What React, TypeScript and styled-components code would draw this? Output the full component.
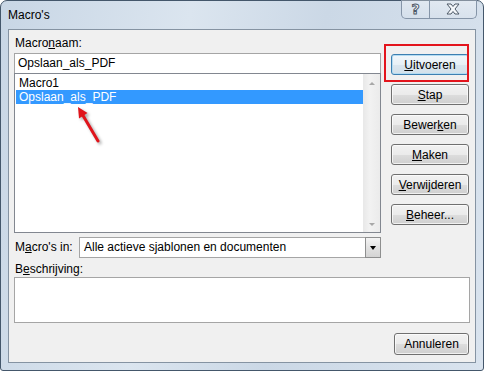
import styled, { createGlobalStyle } from "styled-components";

const GlobalStyle = createGlobalStyle`
  html, body {
    margin: 0;
    padding: 0;
    background: #ffffff;
  }
  body {
    font-family: "Liberation Sans", Arial, sans-serif;
    font-size: 12px;
    color: #000;
  }
`;

const Window = styled.div`
  position: relative;
  width: 484px;
  height: 371px;
  box-sizing: border-box;
  border: 1px solid #44576b;
  border-radius: 7px 7px 3px 3px;
  background: linear-gradient(100deg, #c8d6e5 0%, #dbe5ef 35%, #cbd8e6 60%, #d9e3ee 100%);
  padding: 0 7px 7px;
  display: flex;
  flex-direction: column;
`;

const TitleBar = styled.div`
  height: 28px;
  display: flex;
  justify-content: space-between;
  align-items: flex-start;
`;

const Title = styled.span`
  margin-top: 7px;
  line-height: 15px;
  font-size: 12px;
`;

const CaptionButtons = styled.div`
  display: flex;
  margin-top: -1px;
  margin-right: -1px;
`;

const CaptionButton = styled.div<{ $wide?: boolean }>`
  width: ${(p) => (p.$wide ? 47 : 29)}px;
  height: 19px;
  box-sizing: border-box;
  border: 1px solid #8595a8;
  border-top: none;
  border-left: ${(p) => (p.$wide ? "none" : "1px solid #8595a8")};
  border-radius: ${(p) => (p.$wide ? "0 0 5px 0" : "0 0 0 5px")};
  background: linear-gradient(180deg, rgba(255, 255, 255, 0.35), rgba(255, 255, 255, 0.1));
  display: flex;
  align-items: center;
  justify-content: center;
`;

const HelpGlyph = styled.span`
  font-family: "DejaVu Sans", sans-serif;
  font-weight: bold;
  font-size: 14px;
  line-height: 14px;
  color: #f4f7fa;
  -webkit-text-stroke: 1px #4e5a68;
`;

const Client = styled.div`
  flex: 1;
  background: #f0f0f0;
  border: 1px solid #8593a2;
  padding: 6px 5px 0 5px;
  display: flex;
  flex-direction: column;
`;

const TopSection = styled.div`
  display: flex;
  gap: 10px;
`;

const LeftCol = styled.div`
  width: 367px;
  display: flex;
  flex-direction: column;
`;

const Label = styled.div`
  line-height: 15px;
  height: 15px;
  padding-left: 1px;
  white-space: nowrap;
`;

const TextInput = styled.div`
  margin-top: 2px;
  height: 21px;
  box-sizing: border-box;
  border: 1px solid #a5a5a5;
  background: #fff;
  padding-left: 3px;
  line-height: 19px;
`;

const List = styled.div`
  margin-top: -1px;
  height: 160px;
  box-sizing: border-box;
  border: 1px solid #828790;
  background: #fff;
  display: flex;
`;

const ListItems = styled.div`
  flex: 1;
  padding: 2px 0 0 1px;
`;

const ListRow = styled.div<{ $selected?: boolean }>`
  height: 14px;
  line-height: 14px;
  padding-left: 3px;
  background: ${(p) => (p.$selected ? "#3399ff" : "transparent")};
  color: ${(p) => (p.$selected ? "#fff" : "#000")};
`;

const Scrollbar = styled.div`
  width: 17px;
  background: linear-gradient(90deg, #e8e8e8, #f2f2f2 40%, #ebebeb);
  display: flex;
  flex-direction: column;
  justify-content: space-between;
  align-items: center;
  padding: 8px 0 6px;
  box-sizing: border-box;
`;

const ScrollArrow = styled.div<{ $down?: boolean }>`
  width: 0;
  height: 0;
  border-left: 3px solid transparent;
  border-right: 3px solid transparent;
  ${(p) => (p.$down ? "border-top: 3px solid #a8a8a8;" : "border-bottom: 3px solid #a8a8a8;")}
`;

const ComboRow = styled.div`
  margin-top: 4px;
  display: flex;
  align-items: center;
`;

const ComboLabel = styled(Label)`
  width: 64px;
`;

const Combo = styled.div`
  flex: 1;
  height: 21px;
  box-sizing: border-box;
  border: 1px solid #a5a5a5;
  background: #fff;
  display: flex;
`;

const ComboText = styled.div`
  flex: 1;
  padding-left: 4px;
  line-height: 19px;
`;

const DropButton = styled.div`
  width: 16px;
  box-sizing: border-box;
  border: 1px solid #8e8f8f;
  margin: -1px -1px -1px 0;
  background: linear-gradient(180deg, #f4f4f4, #e2e2e2 50%, #d4d4d4);
  display: flex;
  align-items: center;
  justify-content: center;
`;

const DropTriangle = styled.div`
  width: 0;
  height: 0;
  border-left: 3.5px solid transparent;
  border-right: 3.5px solid transparent;
  border-top: 4px solid #000;
`;

const ButtonCol = styled.div`
  width: 78px;
  margin-top: 18px;
  display: flex;
  flex-direction: column;
  gap: 9px;
`;

const Button = styled.button<{ $default?: boolean }>`
  height: 21px;
  width: 78px;
  box-sizing: border-box;
  padding: 0;
  font-family: inherit;
  font-size: 12px;
  color: #000;
  border: 1px solid ${(p) => (p.$default ? "#3c7fb1" : "#707070")};
  border-radius: 3px;
  background: ${(p) =>
    p.$default
      ? "linear-gradient(180deg, #f1f7fb 0%, #e7f0f6 50%, #dae6ef 51%, #d2e0ea 100%)"
      : "linear-gradient(180deg, #f2f2f2 0%, #ebebeb 50%, #dddddd 51%, #cfcfcf 100%)"};
  box-shadow: inset 0 0 0 1px ${(p) => (p.$default ? "#b4dcf2" : "rgba(255,255,255,0.7)")};
  cursor: default;
`;

const Marked = styled.div`
  position: relative;
`;

const RedFrame = styled.div`
  position: absolute;
  left: -7px;
  top: -10px;
  width: 85px;
  height: 38px;
  box-sizing: border-box;
  border: 2px solid #e3141c;
`;

const DescLabel = styled(Label)`
  margin-top: 4px;
`;

const DescBox = styled.div`
  height: 46px;
  box-sizing: border-box;
  border: 1px solid #a5a5a5;
  background: #fff;
`;

const Footer = styled.div`
  margin-top: 10px;
  display: flex;
  justify-content: flex-end;
`;

const CancelButton = styled(Button)`
  width: 75px;
  height: 22px;
  margin-right: 1px;
`;

const Arrow = styled.svg`
  position: absolute;
  left: 69px;
  top: 99px;
  filter: drop-shadow(2px 2px 1.5px rgba(0, 0, 0, 0.35));
`;

function CloseIcon() {
  return (
    <svg width="14" height="12" viewBox="0 0 14 12">
      <path
        d="M1 1 H5 L7 3.5 L9 1 H13 L9 6 L13 11 H9 L7 8.5 L5 11 H1 L5 6 Z"
        fill="#f4f7fa"
        stroke="#4e5a68"
        strokeWidth="1"
        strokeLinejoin="round"
      />
    </svg>
  );
}

export default function App() {
  return (
    <>
      <GlobalStyle />
      <Window>
        <TitleBar>
          <Title>Macro's</Title>
          <CaptionButtons>
            <CaptionButton>
              <HelpGlyph>?</HelpGlyph>
            </CaptionButton>
            <CaptionButton $wide>
              <CloseIcon />
            </CaptionButton>
          </CaptionButtons>
        </TitleBar>
        <Client>
          <TopSection>
            <LeftCol>
              <Label>
                Macro<u>n</u>aam:
              </Label>
              <TextInput>Opslaan_als_PDF</TextInput>
              <List>
                <ListItems>
                  <ListRow>Macro1</ListRow>
                  <ListRow $selected>Opslaan_als_PDF</ListRow>
                </ListItems>
                <Scrollbar>
                  <ScrollArrow />
                  <ScrollArrow $down />
                </Scrollbar>
              </List>
              <ComboRow>
                <ComboLabel>
                  M<u>a</u>cro's in:
                </ComboLabel>
                <Combo>
                  <ComboText>Alle actieve sjablonen en documenten</ComboText>
                  <DropButton>
                    <DropTriangle />
                  </DropButton>
                </Combo>
              </ComboRow>
            </LeftCol>
            <ButtonCol>
              <Marked>
                <RedFrame />
                <Button $default>
                  <u>U</u>itvoeren
                </Button>
              </Marked>
              <Button>
                <u>S</u>tap
              </Button>
              <Button>
                Bewer<u>k</u>en
              </Button>
              <Button>
                <u>M</u>aken
              </Button>
              <Button>
                <u>V</u>erwijderen
              </Button>
              <Button>
                <u>B</u>eheer...
              </Button>
            </ButtonCol>
          </TopSection>
          <DescLabel>
            B<u>e</u>schrijving:
          </DescLabel>
          <DescBox />
          <Footer>
            <CancelButton>Annuleren</CancelButton>
          </Footer>
        </Client>
        <Arrow width="40" height="48" viewBox="0 0 40 48">
          <line x1="28" y1="41" x2="13" y2="15.5" stroke="#e0141b" strokeWidth="3" strokeLinecap="round" />
          <polygon points="8,7 17.5,13 9,18.5" fill="#e0141b" />
        </Arrow>
      </Window>
    </>
  );
}
